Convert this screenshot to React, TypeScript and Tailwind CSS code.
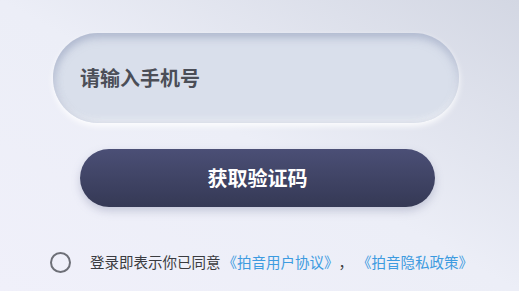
export default function App() {
  return (
    <div
      className="relative h-[291px] w-[519px] overflow-hidden bg-gradient-to-bl from-[#d3d7e3] via-[#eceef7] to-[#f0f0fa]"
      style={{ fontFamily: '"Noto Sans CJK SC", "Noto Sans", sans-serif' }}
    >
      <div className="flex flex-col pt-[33px]">
        {/* phone input */}
        <div className="ml-[53px] flex h-[90px] w-[406px] items-center rounded-full bg-[#d9dfeb] pl-[27px] shadow-[inset_0_5px_8px_rgba(150,160,190,0.55),inset_3px_0_6px_rgba(170,180,205,0.4),inset_0_-3px_6px_rgba(255,255,255,0.7),0_3px_6px_rgba(255,255,255,0.9)]">
          <span className="text-[20px] font-bold leading-none text-[#4b4e57]">请输入手机号</span>
        </div>

        {/* code button */}
        <button className="ml-[80px] mt-[26px] flex h-[58px] w-[355px] items-center justify-center rounded-full bg-gradient-to-b from-[#4b4f76] to-[#353955] shadow-[0_4px_8px_rgba(120,125,160,0.35)]">
          <span className="text-[20px] font-bold leading-none text-white">获取验证码</span>
        </button>

        {/* agreement */}
        <div className="ml-[50px] mt-[45px] flex items-center">
          <div className="h-[21px] w-[21px] shrink-0 rounded-full border-2 border-[#6d6f77]" />
          <div className="ml-[19px] flex items-center whitespace-nowrap text-[14.5px] leading-none text-[#3a3b40]">
            <span>登录即表示你已同意</span>
            <span className="ml-[2px] text-[#3d9be0]">《拍音用户协议》</span>
            <span>，</span>
            <span className="ml-[4px] text-[#3d9be0]">《拍音隐私政策》</span>
          </div>
        </div>
      </div>
    </div>
  );
}
